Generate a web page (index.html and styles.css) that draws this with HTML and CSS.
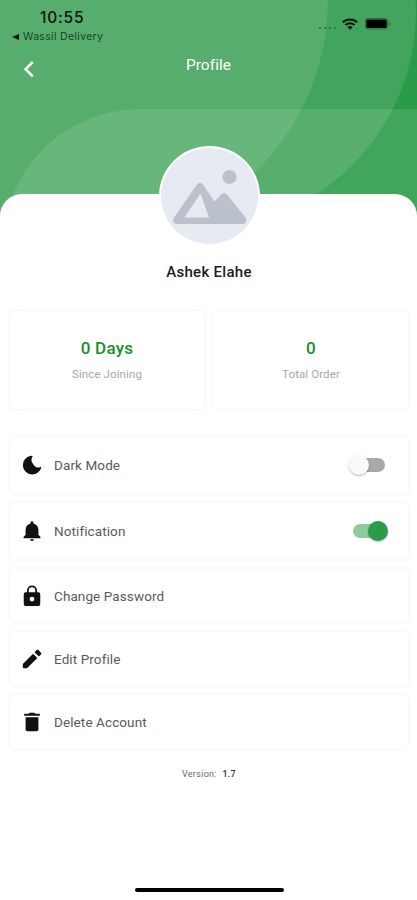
FILE: index.html
```html
<!DOCTYPE html>
<html>
<head>
	<meta charset="utf-8"/>
	<title>Profile</title>
	<link rel="stylesheet" href="styles.css">
</head>
<body>
	<div class="screen">
		<div class="header">
			<svg class="header-bg" width="417" height="216" viewBox="0 0 417 216">
				<rect width="417" height="216" fill="#2a9b48"/>
				<circle cx="198" cy="11" r="218" fill="#43a45d"/>
				<circle cx="86" cy="-1" r="242" fill="#57ad6e"/>
				<path d="M0 0h86v216H0z" fill="#57ad6e"/>
				<path d="M3 246a137 137 0 0 1 137-137h277v137z" fill="#fff" fill-opacity=".11"/>
			</svg>
			<div class="status">
				<div class="clock">
					<div class="time">10:55</div>
					<div class="back-app"><span class="back-mark"></span>Wassil Delivery</div>
				</div>
				<div class="signals">
					<div class="dots"><i></i><i></i><i></i><i></i></div>
					<svg width="16" height="12" viewBox="0 0 16 12" fill="none" stroke="#06150a" stroke-width="2">
						<path d="M.8 4.4a10.2 10.2 0 0 1 14.4 0M3.4 7.1a6.5 6.5 0 0 1 9.2 0"/>
						<path d="M8 11.8 5.4 9.2a3.7 3.7 0 0 1 5.2 0z" fill="#06150a" stroke="none"/>
					</svg>
					<svg class="battery" width="26" height="12" viewBox="0 0 26 12">
						<rect x=".5" y=".5" width="22" height="10.5" rx="2.5" fill="none" stroke="#2c6c3e"/>
						<rect x="1.3" y="1.5" width="20.4" height="8.5" rx="1.2" fill="#000"/>
						<path d="M24 4v4q1.6-.6 1.6-2T24 4z" fill="#2c6c3e"/>
					</svg>
				</div>
			</div>
			<div class="title-bar">
				<svg class="back" width="12" height="18" viewBox="0 0 12 18" fill="none" stroke="#fff" stroke-width="2.5">
					<path d="M9.800 2 2.600 9.200l7.200 7.200"/>
				</svg>
				<h1>Profile</h1>
			</div>
		</div>

		<div class="sheet">
			<div class="avatar">
				<svg width="97" height="96" viewBox="1 2 97 96">
					<circle cx="69.500" cy="31" r="7" fill="#bac1ca"/>
					<path fill="#bac1ca" fill-rule="evenodd" d="M37 38.500q3-3.500 6 0L54.500 55.500 61 48.500q3-2.800 6 0L85.500 71.500q2.500 6-3 6.500H17q-6-1-3-6.500zM40.500 47.500 24.500 71.500H49z"/>
				</svg>
			</div>
			<div class="name">Ashek Elahe</div>

			<div class="stats">
				<div class="card stat">
					<div class="value">0 Days</div>
					<div class="label">Since Joining</div>
				</div>
				<div class="card stat">
					<div class="value">0</div>
					<div class="label">Total Order</div>
				</div>
			</div>

			<div class="menu">
				<div class="card row tall">
					<svg class="icon" viewBox="0 0 24 24"><path d="M10.500 2A10.200 10.200 0 1 0 22.300 13.500 5.800 5.800 0 0 1 13.500 11.500 7.500 7.500 0 0 1 12.800 2.200z"/></svg>
					<span>Dark Mode</span>
					<div class="switch"></div>
				</div>
				<div class="card row tall">
					<svg class="icon" viewBox="0 0 24 24"><path d="M12 23c1.100 0 2-.9 2-2h-4c0 1.100.9 2 2 2zM19 16v-5c0-3.700-2-6.500-5.300-7.300V3a1.700 1.700 0 0 0-3.400 0v.7C7 4.500 5 7.300 5 11v5l-2.200 2.500V20h18.400v-1.500z"/></svg>
					<span>Notification</span>
					<div class="switch on"></div>
				</div>
				<div class="card row">
					<svg class="icon" viewBox="0 0 24 24"><path d="M19 8H17.500V6A5.500 5.500 0 0 0 6.500 6v2H5A2 2 0 0 0 3 10v11A2 2 0 0 0 5 23h14a2 2 0 0 0 2-2V10A2 2 0 0 0 19 8zM12 18a2.600 2.600 0 1 1 0-5.200 2.600 2.600 0 0 1 0 5.200zM15.500 8h-7V6a3.500 3.500 0 0 1 7 0z"/></svg>
					<span>Change Password</span>
				</div>
				<div class="card row">
					<svg class="icon" viewBox="0 0 24 24"><path d="M2 17.500v3.900q0 .8.800.8h3.700L17.900 11l-4.700-4.700zM21.800 7c.6-.6.6-1.300 0-1.900l-2.800-2.800c-.6-.6-1.300-.6-1.900 0l-2.400 2.400 4.700 4.700z"/></svg>
					<span>Edit Profile</span>
				</div>
				<div class="card row">
					<svg class="icon" viewBox="0 0 24 24"><path d="M5 20c0 1.300.9 2.200 2.200 2.200h9.600c1.300 0 2.200-.9 2.200-2.200V6.700H5zM20.500 3h-4.800l-1.200-1.200h-5L8.300 3H3.500v2.200h17z"/></svg>
					<span>Delete Account</span>
				</div>
			</div>

			<div class="version"><span>Version:</span> <b>1.7</b></div>
			<div class="home-bar"></div>
		</div>
	</div>
</body>
</html>
```
FILE: styles.css
```css
* {
	box-sizing: border-box;
}
body {
	margin: 0;
	background: #fff;
	font-family: Roboto, "Liberation Sans", sans-serif;
}
.screen {
	width: 417px;
	height: 900px;
	overflow: hidden;
	display: flex;
	flex-direction: column;
}
.header {
	position: relative;
	height: 194px;
	flex: none;
}
.header-bg {
	position: absolute;
	top: 0;
	left: 0;
}
.status {
	position: relative;
	display: flex;
	justify-content: space-between;
	height: 46px;
	padding: 9px 26px 0 12px;
	color: #06150a;
}
.time {
	padding-left: 28px;
	font: 500 15.5px/18px Inter, sans-serif;
	letter-spacing: 0.8px;
}
.back-app {
	display: flex;
	align-items: center;
	gap: 4px;
	padding-top: 1px;
	font: 400 10.5px/18px Inter, sans-serif;
	letter-spacing: 0.32px;
	color: #17462a;
}
.back-mark {
	border: 3.5px solid transparent;
	border-left: 0;
	border-right: 7px solid #06150a;
}
.signals {
	display: flex;
	height: 30px;
	padding-top: 9px;
}
.dots {
	display: flex;
	gap: 3px;
	padding: 9px 6px 0 0;
}
.dots i {
	width: 2px;
	height: 2px;
	border-radius: 50%;
	background: #2c6c3e;
}
.battery {
	margin: 0 0 0 7px;
}
.title-bar {
	position: relative;
	display: grid;
	grid-template-columns: 1fr auto 1fr;
	height: 38px;
	padding: 0 23px;
}
.back {
	margin-top: 14px;
}
.title-bar h1 {
	margin: 9px 0 0;
	font-size: 15.5px;
	line-height: 20px;
	font-weight: 400;
	letter-spacing: 0.05px;
	color: #fff;
}
.sheet {
	position: relative;
	flex: 1;
	display: flex;
	flex-direction: column;
	padding: 0 9px 8px 10px;
	border-radius: 22px 22px 0 0;
	background: #fff;
}
.avatar {
	width: 101px;
	height: 100px;
	margin: -48px auto 0;
	border: 2px solid #fff;
	border-radius: 50%;
	background: #e6eaf3;
	flex: none;
}
.avatar svg {
	display: block;
}
.name {
	margin-top: 16px;
	font-size: 15px;
	line-height: 20px;
	font-weight: 500;
	letter-spacing: 0.3px;
	text-align: center;
	color: #1c1c1c;
}
.card {
	border-radius: 5px;
	background: #fff;
	box-shadow: 0 0 5px 1px rgba(0, 0, 0, 0.045);
}
.stats {
	display: grid;
	grid-template-columns: 1fr 1fr;
	gap: 10px;
	margin-top: 29px;
}
.stat {
	height: 98px;
	padding-top: 26px;
	text-align: center;
}
.value {
	font-size: 17px;
	line-height: 22px;
	font-weight: 500;
	letter-spacing: 0.25px;
	color: #17902c;
}
.label {
	margin-top: 6px;
	font-size: 11.5px;
	line-height: 18px;
	letter-spacing: 0.1px;
	color: #a8a8a8;
}
.menu {
	display: flex;
	flex-direction: column;
	gap: 10px;
	margin-top: 28px;
}
.row {
	display: flex;
	align-items: center;
	height: 53px;
	padding: 1px 20px 0 11px;
	font-size: 13.5px;
	letter-spacing: 0.1px;
	color: #5a5a5a;
}
.tall {
	height: 56px;
	padding-top: 0;
}
.icon {
	width: 22px;
	height: 22px;
	margin-right: 11px;
	fill: #111;
}
.switch {
	position: relative;
	width: 32px;
	height: 14px;
	margin: 0 3px 0 auto;
	border-radius: 7px;
	background: #a9a9a9;
}
/* the knob overhangs the track */
.switch::after {
	content: "";
	position: absolute;
	top: -3px;
	left: -4px;
	width: 20px;
	height: 20px;
	border-radius: 50%;
	background: #fafafa;
	box-shadow: 0 1px 2px rgba(0, 0, 0, 0.3);
}
.switch.on {
	background: #90ca9f;
}
.switch.on::after {
	left: 15px;
	background: #2a9c49;
}
.version {
	margin-top: 18px;
	font-size: 9px;
	line-height: 16px;
	letter-spacing: 0.3px;
	text-align: center;
	color: #666;
}
.version b {
	margin-left: 3px;
	font-weight: 500;
	color: #333;
}
.home-bar {
	width: 149px;
	height: 4px;
	margin: auto auto 0;
	border-radius: 2px;
	background: #000;
}
```
